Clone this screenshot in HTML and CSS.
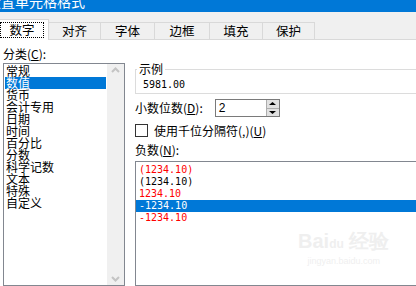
FILE: index.html
```html
<!DOCTYPE html>
<html>
<head>
    <title>设置单元格格式</title>
    <link rel="stylesheet" href="styles.css">
</head>

<body>
    <div class="titlebar"><span class="title">设置单元格格式</span></div>

    <div class="tabs">
        <div class="tab active"><span class="focus">数字</span></div>
        <div class="tab w52">对齐</div>
        <div class="tab w54">字体</div>
        <div class="tab w55">边框</div>
        <div class="tab w53">填充</div>
        <div class="tab w52">保护</div>
    </div>

    <div class="page">
        <div class="left">
            <div class="label">分类(<u>C</u>):</div>
            <div class="listbox">
                <div class="items">
                    <div class="item">常规</div>
                    <div class="item selected">数值</div>
                    <div class="item">货币</div>
                    <div class="item">会计专用</div>
                    <div class="item">日期</div>
                    <div class="item">时间</div>
                    <div class="item">百分比</div>
                    <div class="item">分数</div>
                    <div class="item">科学记数</div>
                    <div class="item">文本</div>
                    <div class="item">特殊</div>
                    <div class="item">自定义</div>
                </div>
                <div class="scrollbar">
                    <svg width="17" height="14" viewBox="0 0 17 14"><path d="M5 8 L8.5 4.5 L12 8" fill="none" stroke="#c4c4c4" stroke-width="2"/></svg>
                    <svg width="17" height="10" viewBox="0 0 17 10"><path d="M5 2 L8.5 5.5 L12 2" fill="none" stroke="#c4c4c4" stroke-width="2"/></svg>
                </div>
            </div>
        </div>

        <div class="right">
            <fieldset class="sample">
                <legend>示例</legend>
                <div class="mono">5981.00</div>
            </fieldset>

            <div class="row decimals">
                <span class="label">小数位数(<u>D</u>):</span>
                <div class="spin">
                    <span class="spin-value">2</span>
                    <div class="spin-buttons">
                        <div class="spin-btn"><svg width="9" height="5" viewBox="0 0 9 5"><path d="M1 4 L4.5 1 L8 4 Z" fill="#000"/></svg></div>
                        <div class="spin-btn"><svg width="9" height="5" viewBox="0 0 9 5"><path d="M1 1 L4.5 4 L8 1 Z" fill="#000"/></svg></div>
                    </div>
                </div>
            </div>

            <div class="row check">
                <span class="box"></span>
                <span class="label">使用千位分隔符(,)(<u>U</u>)</span>
            </div>

            <div class="label neg-label">负数(<u>N</u>):</div>
            <div class="neglist">
                <div class="neg red">(1234.10)</div>
                <div class="neg">(1234.10)</div>
                <div class="neg red">1234.10</div>
                <div class="neg selected">-1234.10</div>
                <div class="neg red">-1234.10</div>
            </div>
        </div>
    </div>

    <div class="watermark">
        <div class="wm-logo">Bai<span class="paw">du</span> 经验</div>
        <div class="wm-url">jingyan.baidu.com</div>
    </div>
</body>
</html>
```

FILE: styles.css
```css
html, body {
    margin: 0;
    padding: 0;
    height: 286px;
    overflow: hidden;
}
body {
    font-family: "Noto Sans CJK SC", "Liberation Sans", sans-serif;
    font-size: 12px;
    color: #000;
    background-color: #fff;
    position: relative;
}
u {
    text-decoration: underline;
}

.titlebar {
    height: 12px;
    background-color: #0078d7;
    overflow: hidden;
}
.title {
    display: block;
    color: #fff;
    font-size: 14px;
    line-height: 14px;
    margin-top: -6px;
    margin-left: -13px;
}

.tabs {
    height: 27px;
    background-color: #f0f0f0;
    border-bottom: 1px solid #d9d9d9;
    display: flex;
    align-items: flex-end;
}
.tab {
    height: 16px;
    border: 1px solid #d9d9d9;
    border-bottom: none;
    border-left: none;
    text-align: center;
    line-height: 16px;
    font-size: 12.5px;
    box-sizing: content-box;
}
.tab.active {
    width: 48px;
    height: 20px;
    margin-bottom: -1px;
    background-color: #fff;
    border-left: none;
    display: flex;
    align-items: center;
    justify-content: center;
}
.focus {
    border: 1px dotted #000;
    padding: 0 8px;
    line-height: 14px;
    margin-left: -4px;
}
.w52 { width: 51px; }
.w53 { width: 52px; }
.w54 { width: 53px; }
.w55 { width: 54px; }

.page {
    display: flex;
    height: 246px;
}

.left {
    width: 125px;
    padding-left: 3px;
    box-sizing: border-box;
    display: flex;
    flex-direction: column;
}
.label {
    line-height: 12px;
    white-space: nowrap;
}
.left .label {
    margin-top: 8px;
}
.listbox {
    margin-top: 3px;
    height: 240px;
    border: 1px solid #828790;
    display: flex;
}
.items {
    flex: 1;
    padding: 1px 1px 0 1px;
}
.item {
    line-height: 12px;
    height: 12px;
    padding-left: 1px;
    white-space: nowrap;
}
.item.selected {
    background-color: #0078d7;
    color: #fff;
}
.scrollbar {
    width: 17px;
    background-color: #f0f0f0;
    display: flex;
    flex-direction: column;
    justify-content: space-between;
}

.right {
    flex: 1;
    margin-left: 10px;
    display: flex;
    flex-direction: column;
}
.sample {
    margin: 23px 0 0 0;
    padding: 4px 0 2px 7px;
    border: 1px solid #dcdcdc;
    border-right: none;
    min-width: 0;
}
.sample legend {
    padding: 0 2px 0 2px;
    margin-left: -6px;
    line-height: 12px;
}
.mono {
    font-family: "DejaVu Sans Mono", monospace;
    font-size: 10px;
    line-height: 12px;
}

.row {
    display: flex;
    align-items: center;
}
.decimals {
    margin-top: 5px;
    height: 18px;
}
.spin {
    margin-left: 12px;
    width: 63px;
    height: 16px;
    border: 1px solid #7a7a7a;
    display: flex;
    justify-content: space-between;
}
.spin-value {
    padding-left: 3px;
    line-height: 16px;
    font-family: "Liberation Sans", sans-serif;
}
.spin-buttons {
    width: 12px;
    display: flex;
    flex-direction: column;
    border-left: 1px solid #adadad;
}
.spin-btn {
    flex: 1;
    background-color: #e1e1e1;
    display: flex;
    align-items: center;
    justify-content: center;
}
.spin-btn + .spin-btn {
    border-top: 1px solid #adadad;
}

.check {
    margin-top: 7px;
    height: 13px;
}
.box {
    width: 11px;
    height: 11px;
    border: 1px solid #333;
    margin-right: 6px;
    background-color: #fff;
}

.neg-label {
    margin-top: 7px;
}
.neglist {
    margin-top: 5px;
    flex: 1;
    border: 1px solid #828790;
    border-right: none;
    padding-top: 2px;
}
.neg {
    font-family: "DejaVu Sans Mono", monospace;
    font-size: 10px;
    height: 12px;
    line-height: 12px;
    padding-left: 3px;
}
.neg.red {
    color: #ff0000;
}
.neg.selected {
    background-color: #0078d7;
    color: #fff;
}

.watermark {
    position: absolute;
    left: 298px;
    top: 230px;
    color: #efefef;
    text-align: center;
}
.wm-logo {
    font-family: "Liberation Sans", sans-serif;
    font-size: 20px;
    font-weight: bold;
    line-height: 22px;
}
.paw {
    font-size: 12px;
}
.wm-url {
    font-family: "Liberation Sans", sans-serif;
    font-size: 9px;
    line-height: 12px;
}
```
